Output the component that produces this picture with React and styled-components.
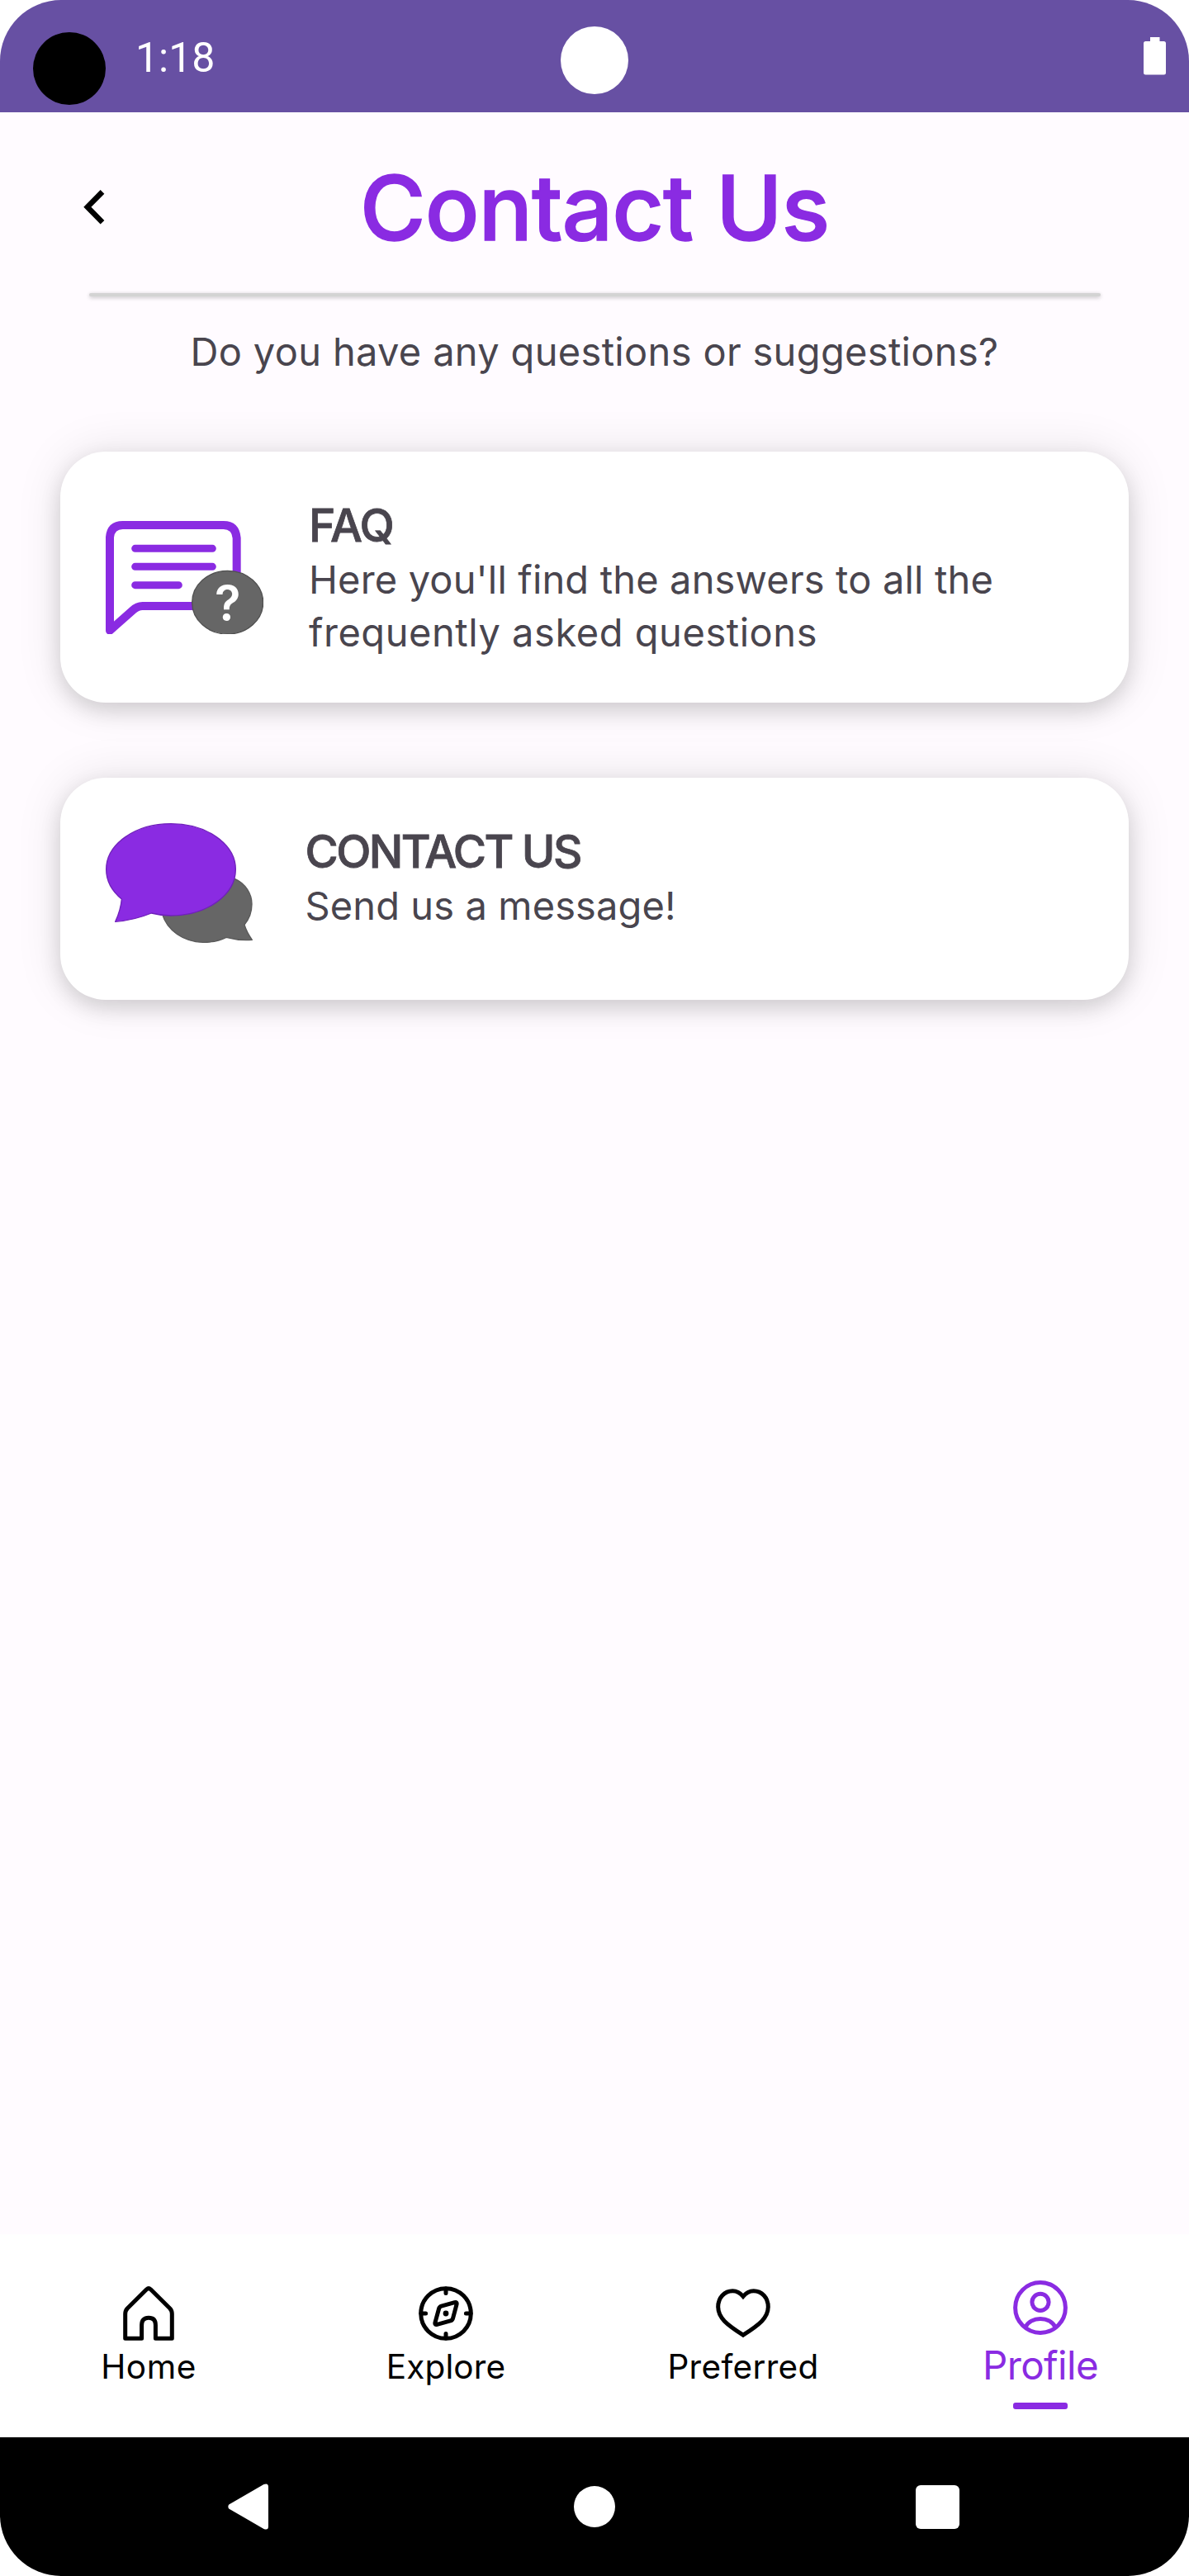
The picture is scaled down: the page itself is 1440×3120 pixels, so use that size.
import React from 'react';
import styled, { createGlobalStyle } from 'styled-components';

const color = {
  accent: '#8a2be2',
  text: '#49454e',
  surface: '#fffbff',
  status: '#6750a3',
  grey: '#666666',
};

const GlobalStyle = createGlobalStyle`
  * { box-sizing: border-box; }
  body { margin: 0; background: #ffffff; }
  h1, h2, p { margin: 0; font-weight: 400; }
  button { border: 0; padding: 0; background: none; font: inherit; color: inherit; }
  svg { display: block; flex: none; }
`;

const Phone = styled.div`
  display: flex;
  flex-direction: column;
  width: 1440px;
  height: 3120px;
  overflow: hidden;
  border-radius: 74px;
  background: ${color.surface};
  color: ${color.text};
  font-family: 'Inter', 'Liberation Sans', sans-serif;
`;

const StatusBar = styled.header`
  display: grid;
  grid-template-columns: 1fr 82px 1fr;
  flex: none;
  height: 136px;
  background: ${color.status};
  color: #ffffff;
`;

const StatusStart = styled.div`
  display: flex;
  align-items: flex-start;
  gap: 36px;
  padding: 39px 0 0 40px;
`;

const Dot = styled.span`
  width: ${(p) => p.$size}px;
  height: ${(p) => p.$size}px;
  border-radius: 50%;
  background: ${(p) => p.$fill};
`;

const Clock = styled.span`
  font: 400 50px/62px 'Roboto', sans-serif;
`;

const StatusCenter = styled.div`
  padding-top: 32px;
  line-height: 0;

  ${Dot} { display: block; }
`;

const StatusEnd = styled.div`
  display: flex;
  justify-content: flex-end;
  align-items: flex-start;
  padding: 45px 28px 0 0;
`;

const TitleBar = styled.div`
  display: grid;
  grid-template-columns: 120px 1fr 120px;
  align-items: center;
  flex: none;
  height: 219px;
  padding-top: 10px;
`;

const BackButton = styled.button`
  justify-self: end;
  margin-right: -7px;
`;

const Title = styled.h1`
  text-align: center;
  font-size: 109px;
  line-height: 140px;
  font-weight: 500;
  letter-spacing: -1.1px;
  color: ${color.accent};
  -webkit-text-stroke: 1.4px ${color.accent};
`;

const Divider = styled.hr`
  flex: none;
  width: 1225px;
  height: 4px;
  margin: 0 auto;
  border: 0;
  border-radius: 2px;
  background: #d3d3d3;
  box-shadow: 0 2px 5px rgba(0, 0, 0, 0.18), 0 0 4px rgba(0, 0, 0, 0.08);
`;

const Subtitle = styled.p`
  margin-top: 35px;
  text-align: center;
  font-size: 47px;
  line-height: 64px;
  letter-spacing: 0.33px;
`;

const CardList = styled.main`
  display: flex;
  flex-direction: column;
  flex: 1;
  gap: 91px;
  padding: 89px 73px 0;
`;

const Card = styled.section`
  display: flex;
  align-items: flex-start;
  gap: ${(p) => p.$gap}px;
  height: ${(p) => p.$height}px;
  padding: 55px 55px 0;
  border-radius: 55px;
  background: #ffffff;
  box-shadow: 0 10px 26px rgba(0, 0, 0, 0.14), 0 0 56px rgba(0, 0, 0, 0.1);
`;

const CardIcon = styled.div`
  padding-top: ${(p) => p.$drop}px;
`;

const CardText = styled.div`
  display: flex;
  flex-direction: column;
  padding-top: 2px;
`;

const CardTitle = styled.h2`
  margin-bottom: 2px;
  font-size: 55px;
  line-height: 64px;
  font-weight: 500;
  letter-spacing: ${(p) => p.$track}px;
  -webkit-text-stroke: 0.8px ${color.text};
`;

const CardLine = styled.p`
  font-size: 47px;
  line-height: 64px;
  letter-spacing: ${(p) => p.$track}px;
  white-space: nowrap;
`;

const TabBar = styled.nav`
  display: grid;
  grid-template-columns: repeat(4, 1fr);
  flex: none;
  height: 246px;
  background: #ffffff;
`;

const Tab = styled.button`
  display: flex;
  flex-direction: column;
  align-items: center;
  padding-top: ${(p) => (p.$active ? 56 : 63)}px;
  color: ${(p) => (p.$active ? color.accent : '#000000')};
`;

const TabLabel = styled.span`
  margin-top: ${(p) => (p.$active ? 9 : 4)}px;
  font-size: ${(p) => (p.$active ? 47.5 : 40.5)}px;
  line-height: 56px;
  letter-spacing: ${(p) => p.$track}px;
`;

const ActiveMark = styled.span`
  width: 66px;
  height: 8px;
  margin-top: 17px;
  border-radius: 3px;
  background: currentColor;
`;

const SystemBar = styled.footer`
  display: grid;
  grid-template-columns: 602px 236px 594px;
  align-items: center;
  justify-items: center;
  flex: none;
  height: 168px;
  background: #000000;
`;

const RecentsSquare = styled.span`
  width: 53px;
  height: 53px;
  border-radius: 6px;
  background: #ffffff;
`;

function BatteryIcon() {
  return (
    <svg width="27" height="46" viewBox="0 0 27 46" fill="#ffffff">
      <path d="M8 0H19.5V5H24.5Q27 5 27 7.5V43Q27 45.5 24.5 45.5H2.5Q0 45.5 0 43V7.5Q0 5 2.5 5H8Z" />
    </svg>
  );
}

function ChevronIcon() {
  return (
    <svg width="26" height="42" viewBox="0 0 26 42" fill="none" stroke="#000000" strokeWidth="6.6">
      <path d="M23 2.4L4.9 20.8L23 39.2" />
    </svg>
  );
}

function FaqIcon() {
  return (
    <svg width="191" height="137" viewBox="204 303 573 411" fill="none" stroke={color.accent} strokeLinecap="round" strokeLinejoin="round">
      <path strokeWidth="30" d="M680 500V365Q676 318 632 318H266Q223 318 219 362V701L302 628Q318 612 338 612H530" />
      <path strokeWidth="27" d="M311 403H592M311 469H592M311 536H469" />
      <ellipse cx="647" cy="599" rx="129" ry="115" fill={color.grey} stroke="#505050" strokeWidth="4" />
      <text x="647" y="663" textAnchor="middle" fontFamily="Inter, sans-serif" fontWeight="600" fontSize="174" fill="#ffffff" stroke="none">?</text>
    </svg>
  );
}

function ChatIcon() {
  return (
    <svg width="178" height="145" viewBox="207 231 534 435" strokeWidth="4" strokeLinejoin="round">
      <path fill={color.grey} stroke="#5a5a5a" d="M600 420L676 433C715 450 738 488 738 525C738 555 728 580 711 600C717 620 727 638 739 655C705 658 675 654 645 646C620 659 590 664 560 664C490 662 430 622 412 560Z" />
      <path fill={color.accent} stroke="#6f20ba" d="M444 233C574 233 679 307 679 399C679 492 574 567 444 567C419 567 396 564 373 558Q310 584 242 589Q262 545 265 507C230 478 209 441 209 399C209 307 314 233 444 233Z" />
    </svg>
  );
}

const TabSvg = ({ children }) => (
  <svg width="66" height="66" viewBox="0 0 66 66" fill="none" stroke="currentColor" strokeWidth="5" strokeLinecap="round" strokeLinejoin="round">
    {children}
  </svg>
);

const HomeIcon = () => (
  <TabSvg>
    <path d="M24.6 63.3H4.7V33.5Q4.7 29.5 7.4 26.7L30.6 3.8Q33 1.6 35.4 3.8L58.6 26.7Q61.3 29.5 61.3 33.5V63.3H41.4V47Q41.4 38.3 33 38.3Q24.6 38.3 24.6 47Z" />
  </TabSvg>
);

const ExploreIcon = () => (
  <TabSvg>
    <circle cx="33" cy="33" r="30.3" />
    <path d="M33 3V8.6M33 57.4V63M3 33H8.6M57.4 33H63" />
    <path d="M27.5 24.2L43.6 19.6Q46.8 18.8 46 22.2L41.6 38.6Q41 41.2 38.5 41.9L22.4 46.3Q19.2 47 20 43.8L24.5 27.5Q25.1 25 27.5 24.2Z" />
    <circle cx="33" cy="33" r="3.4" fill="currentColor" stroke="none" />
  </TabSvg>
);

const HeartIcon = () => (
  <TabSvg>
    <path strokeLinejoin="miter" d="M33 12.3C29.5 8 25 5.7 20.3 5.7C10.3 5.7 2.7 14 2.7 25C2.7 38.5 13.5 46.5 33 59.2C52.5 46.5 63.3 38.5 63.3 25C63.3 14 55.7 5.7 45.7 5.7C41 5.7 36.5 8 33 12.3Z" />
  </TabSvg>
);

const ProfileIcon = () => (
  <TabSvg>
    <circle cx="33" cy="33" r="30.4" />
    <circle cx="33" cy="26.3" r="10.1" />
    <path d="M15 56.5C17.8 50.3 25 46.4 33 46.4S48.2 50.3 51 56.5" />
  </TabSvg>
);

function BackTriangle() {
  return (
    <svg width="50" height="56" viewBox="0 0 50 56" fill="#ffffff">
      <path d="M1.2 25.6L43.5 1Q49 -1 49 4V52Q49 57 43.5 55L1.2 30.4Q-0.6 28 1.2 25.6Z" />
    </svg>
  );
}

const cards = [
  {
    title: 'FAQ', titleTrack: -1.4, icon: <FaqIcon />, drop: 29, gap: 55, height: 304,
    lines: [
      { text: "Here you'll find the answers to all the", track: 0.16 },
      { text: 'frequently asked questions', track: 0.55 },
    ],
  },
  {
    title: 'CONTACT US', titleTrack: -2.6, icon: <ChatIcon />, drop: 0, gap: 63.5, height: 269,
    lines: [{ text: 'Send us a message!', track: 0.11 }],
  },
];

const tabs = [
  { label: 'Home', track: 0.53, icon: <HomeIcon /> },
  { label: 'Explore', track: 0.17, icon: <ExploreIcon /> },
  { label: 'Preferred', track: 0.31, icon: <HeartIcon /> },
  { label: 'Profile', track: -0.58, icon: <ProfileIcon />, active: true },
];

export default function App() {
  return (
    <>
      <GlobalStyle />
      <Phone>
        <StatusBar>
          <StatusStart>
            <Dot $size={88} $fill="#000000" />
            <Clock>1:18</Clock>
          </StatusStart>
          <StatusCenter>
            <Dot $size={82} $fill="#ffffff" />
          </StatusCenter>
          <StatusEnd>
            <BatteryIcon />
          </StatusEnd>
        </StatusBar>

        <TitleBar>
          <BackButton aria-label="Back">
            <ChevronIcon />
          </BackButton>
          <Title>Contact Us</Title>
        </TitleBar>
        <Divider />
        <Subtitle>Do you have any questions or suggestions?</Subtitle>

        <CardList>
          {cards.map((card) => (
            <Card key={card.title} $height={card.height} $gap={card.gap}>
              <CardIcon $drop={card.drop}>{card.icon}</CardIcon>
              <CardText>
                <CardTitle $track={card.titleTrack}>{card.title}</CardTitle>
                {card.lines.map((line) => (
                  <CardLine key={line.text} $track={line.track}>{line.text}</CardLine>
                ))}
              </CardText>
            </Card>
          ))}
        </CardList>

        <TabBar>
          {tabs.map((tab) => (
            <Tab key={tab.label} $active={tab.active}>
              {tab.icon}
              <TabLabel $active={tab.active} $track={tab.track}>{tab.label}</TabLabel>
              {tab.active && <ActiveMark />}
            </Tab>
          ))}
        </TabBar>

        <SystemBar>
          <BackTriangle />
          <Dot $size={50} $fill="#ffffff" />
          <RecentsSquare />
        </SystemBar>
      </Phone>
    </>
  );
}
